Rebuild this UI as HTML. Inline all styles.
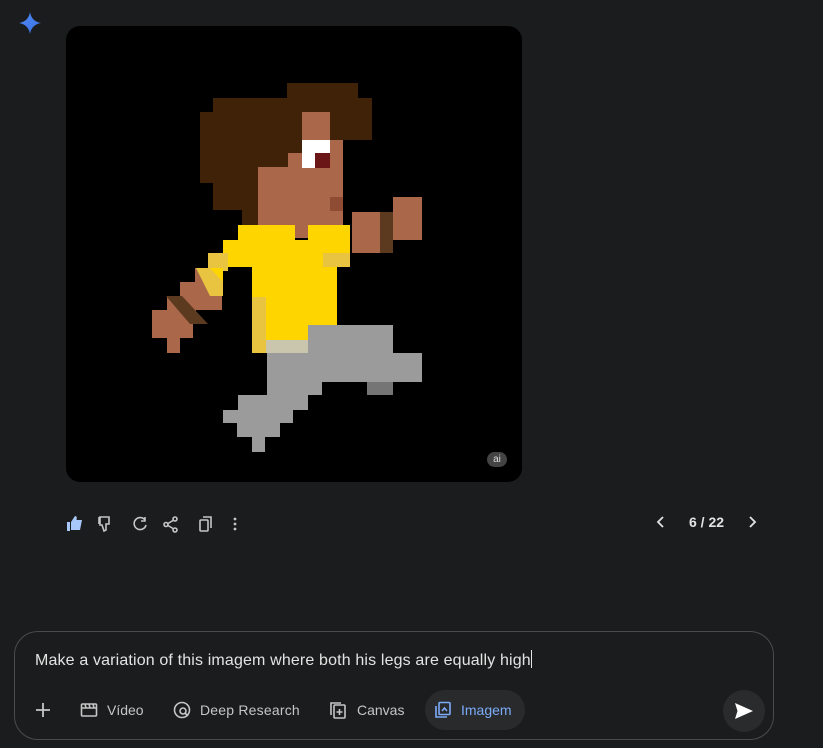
<!DOCTYPE html>
<html><head><meta charset="utf-8"><style>
*{margin:0;padding:0;box-sizing:border-box}
body{width:823px;height:748px;background:#1b1c1d;position:relative;overflow:hidden;font-family:"Liberation Sans",sans-serif;color:#e3e3e3}
.a{position:absolute}
.card{left:66px;top:26px;width:456px;height:456px;background:#000;border-radius:14px;overflow:hidden}
.p{position:absolute}
.h{background:#3f2208}.s{background:#ab6749}.y{background:#ffd500}.ly{background:#e8c441}.g{background:#9b9b9b}.dg{background:#757575}.b{background:#5c3a1f}
.box{left:14px;top:631px;width:760px;height:109px;border:1px solid #4a4b4d;border-radius:24px}
.tool{font-size:14px;color:#c4c7c5;position:absolute;top:702px}
</style></head><body>
<svg class="a" style="left:18px;top:11px" width="24" height="24" viewBox="0 0 24 24"><defs><linearGradient id="gg" x1="0" y1="0" x2="1" y2="1"><stop offset="0" stop-color="#4f8cf7"/><stop offset="1" stop-color="#3a6fe0"/></linearGradient></defs><path d="M12 1C12.8 7 17 11.2 23 12C17 12.8 12.8 17 12 23C11.2 17 7 12.8 1 12C7 11.2 11.2 7 12 1Z" fill="url(#gg)"/></svg>
<div class="a card">
<div style="position:absolute;left:-66px;top:-26px">
<div class="p h" style="left:287px;top:83px;width:71px;height:15px"></div>
<div class="p h" style="left:213px;top:98px;width:159px;height:14px"></div>
<div class="p h" style="left:200px;top:112px;width:172px;height:28px"></div>
<div class="p h" style="left:200px;top:140px;width:102px;height:43px"></div>
<div class="p h" style="left:213px;top:183px;width:59px;height:27px"></div>
<div class="p h" style="left:242px;top:210px;width:30px;height:15px"></div>
<div class="p s" style="left:302px;top:112px;width:28px;height:28px"></div>
<div class="p s" style="left:330px;top:140px;width:13px;height:13px"></div>
<div class="p s" style="left:258px;top:153px;width:85px;height:72px"></div>
<div class="p h" style="left:258px;top:153px;width:30px;height:14px;background:#3f2208"></div>
<div class="p" style="left:302px;top:140px;width:28px;height:28px;background:#fff"></div>
<div class="p" style="left:315px;top:153px;width:15px;height:15px;background:#6b1616"></div>
<div class="p" style="left:330px;top:197px;width:13px;height:14px;background:#8e4c35"></div>
<div class="p s" style="left:295px;top:225px;width:13px;height:13px"></div>
<div class="p y" style="left:238px;top:225px;width:57px;height:15px"></div>
<div class="p y" style="left:308px;top:225px;width:42px;height:28px"></div>
<div class="p y" style="left:223px;top:240px;width:114px;height:27px"></div>
<div class="p ly" style="left:323px;top:253px;width:27px;height:14px"></div>
<div class="p ly" style="left:208px;top:253px;width:20px;height:18px"></div>
<div class="p y" style="left:252px;top:267px;width:85px;height:58px"></div>
<div class="p ly" style="left:252px;top:297px;width:14px;height:56px"></div>
<div class="p y" style="left:266px;top:325px;width:42px;height:15px"></div>
<div class="p s" style="left:352px;top:212px;width:41px;height:41px"></div>
<div class="p s" style="left:393px;top:197px;width:29px;height:43px"></div>
<div class="p b" style="left:380px;top:212px;width:13px;height:41px"></div>
<svg class="p" style="left:0;top:0" width="260" height="360">
<g fill="#ab6749">
<rect x="195" y="268" width="27" height="42"/>
<rect x="180" y="282" width="16" height="41"/>
<rect x="167" y="297" width="14" height="26"/>
<rect x="152" y="310" width="41" height="28"/>
<rect x="167" y="337" width="13" height="16"/>
</g>
<polygon points="196,268 223,268 223,296 210,296" fill="#e8c441"/>
<polygon points="210,268 223,268 223,282" fill="#ffd500"/>
<polygon points="166,296 182,296 208,324 190,324" fill="#5c3a1f"/>
</svg>
<div class="p g" style="left:308px;top:325px;width:85px;height:57px"></div>
<div class="p g" style="left:393px;top:353px;width:29px;height:29px"></div>
<div class="p" style="left:266px;top:340px;width:42px;height:13px;background:#c9c6ad"></div>
<div class="p g" style="left:267px;top:353px;width:55px;height:42px"></div>
<div class="p g" style="left:238px;top:395px;width:70px;height:15px"></div>
<div class="p g" style="left:223px;top:410px;width:70px;height:13px"></div>
<div class="p g" style="left:237px;top:423px;width:43px;height:14px"></div>
<div class="p g" style="left:252px;top:437px;width:13px;height:15px"></div>
<div class="p dg" style="left:367px;top:382px;width:26px;height:13px"></div>
</div>
<div style="position:absolute;left:421px;top:426px;width:20px;height:15px;border-radius:8px;background:#444;color:#ddd;font-size:10px;text-align:center;line-height:15px">ai</div>
</div>
<svg class="a" style="left:65px;top:514px" width="180" height="20" viewBox="0 0 180 20" fill="none" stroke="#a8c7fa" stroke-width="1.6">
<path d="M2 8h3v9H2z M6 8l4-6c2 0 2 2 1.5 4H17l-2 10H6z" fill="#a8c7fa" stroke="none"/>
<g stroke="#c4c7c5"><path d="M35 3h9v7h-3v6l-2 1-2-6h-2z M34 3v7"/>
<path d="M80 6a6 6 0 1 0 1 5M80 3v4h-4"/>
<circle cx="110" cy="5" r="2"/><circle cx="110" cy="16" r="2"/><circle cx="101" cy="10.5" r="2"/><path d="M103 9.5l5-3M103 11.5l5 3"/>
<rect x="135" y="6" width="8" height="11" rx="1"/><path d="M138 3h8v11"/></g>
<g fill="#c4c7c5" stroke="none"><circle cx="170" cy="5" r="1.4"/><circle cx="170" cy="10" r="1.4"/><circle cx="170" cy="15" r="1.4"/></g>
</svg>
<svg class="a" style="left:654px;top:514px" width="110" height="16" fill="none" stroke="#e3e3e3" stroke-width="1.8"><path d="M9 3l-5 5 5 5M96 3l5 5-5 5"/></svg>
<div class="a" style="left:689px;top:514px;font-size:14px;font-weight:bold;color:#e3e3e3">6 / 22</div>
<div class="a box"></div>
<div class="a" style="left:35px;top:650px;font-size:16px;letter-spacing:0.15px;color:#e3e3e3">Make a variation of this imagem where both his legs are equally high<span style="display:inline-block;width:1px;height:18px;background:#e3e3e3;vertical-align:-3px"></span></div>
<svg class="a" style="left:34px;top:701px" width="18" height="18" stroke="#c4c7c5" stroke-width="1.8"><path d="M9 2v14M2 9h14"/></svg>
<svg class="a" style="left:80px;top:702px" width="18" height="16" fill="none" stroke="#c4c7c5" stroke-width="1.6"><rect x="1.5" y="2" width="15" height="12" rx="1"/><path d="M1.5 6h15M5 2l1 4M9 2l1 4M13 2l1 4"/></svg>
<div class="tool" style="left:107px">Vídeo</div>
<svg class="a" style="left:173px;top:701px" width="18" height="18" fill="none" stroke="#c4c7c5" stroke-width="1.6"><circle cx="9" cy="9" r="7.5"/><circle cx="10" cy="10" r="3"/><path d="M12 12l3 3"/></svg>
<div class="tool" style="left:200px;letter-spacing:0.2px">Deep Research</div>
<svg class="a" style="left:329px;top:701px" width="18" height="18" fill="none" stroke="#c4c7c5" stroke-width="1.6"><rect x="5" y="4" width="11" height="13" rx="1"/><path d="M2 14V2h10M10.5 8v6M7.5 11h6"/></svg>
<div class="tool" style="left:357px">Canvas</div>
<div class="a" style="left:425px;top:690px;width:100px;height:40px;border-radius:20px;background:#282a2c"></div>
<svg class="a" style="left:434px;top:701px" width="18" height="18" fill="none" stroke="#7cacf8" stroke-width="1.6"><rect x="5" y="1.5" width="11" height="12" rx="1"/><path d="M2 5v11h11M8 10l2.5-3 2.5 3"/></svg>
<div class="tool" style="left:461px;color:#7cacf8">Imagem</div>
<div class="a" style="left:723px;top:690px;width:42px;height:42px;border-radius:50%;background:#2a2b2d"></div>
<svg class="a" style="left:734px;top:702px" width="20" height="18"><path d="M1 1l18 8-18 8 2.5-8z" fill="#fff"/></svg>
</body></html>
